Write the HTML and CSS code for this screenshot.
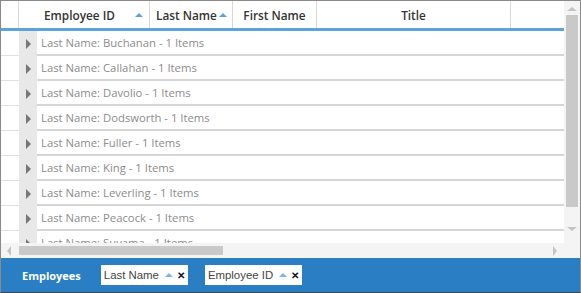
FILE: index.html
```html
<!DOCTYPE html>
<html>
<head>
    <title>Employees grid</title>
    <link rel="stylesheet" href="styles.css">
</head>
<body>
<div class="grid">
    <div class="grid-main">
        <div class="grid-content">
            <div class="grid-header">
                <div class="hcell indent"></div>
                <div class="hcell col-id">Employee ID<span class="sort"></span></div>
                <div class="hcell col-last">Last Name<span class="sort"></span></div>
                <div class="hcell col-first center">First Name</div>
                <div class="hcell col-title center">Title</div>
                <div class="hcell col-rest"></div>
            </div>
            <div class="grid-rows">
                <div class="group-row"><div class="indent"></div><div class="expander"><span class="tri"></span></div><div class="group-text">Last Name: Buchanan - 1 Items</div></div>
                <div class="group-row"><div class="indent"></div><div class="expander"><span class="tri"></span></div><div class="group-text">Last Name: Callahan - 1 Items</div></div>
                <div class="group-row"><div class="indent"></div><div class="expander"><span class="tri"></span></div><div class="group-text">Last Name: Davolio - 1 Items</div></div>
                <div class="group-row"><div class="indent"></div><div class="expander"><span class="tri"></span></div><div class="group-text">Last Name: Dodsworth - 1 Items</div></div>
                <div class="group-row"><div class="indent"></div><div class="expander"><span class="tri"></span></div><div class="group-text">Last Name: Fuller - 1 Items</div></div>
                <div class="group-row"><div class="indent"></div><div class="expander"><span class="tri"></span></div><div class="group-text">Last Name: King - 1 Items</div></div>
                <div class="group-row"><div class="indent"></div><div class="expander"><span class="tri"></span></div><div class="group-text">Last Name: Leverling - 1 Items</div></div>
                <div class="group-row"><div class="indent"></div><div class="expander"><span class="tri"></span></div><div class="group-text">Last Name: Peacock - 1 Items</div></div>
                <div class="group-row"><div class="indent"></div><div class="expander"><span class="tri"></span></div><div class="group-text">Last Name: Suyama - 1 Items</div></div>
            </div>
        </div>
        <div class="vscroll">
            <span class="arrow-up"></span>
            <div class="vthumb"></div>
            <span class="arrow-down"></span>
        </div>
        <div class="hscroll">
            <span class="arrow-left"></span>
            <div class="hthumb"></div>
            <span class="arrow-right"></span>
        </div>
        <div class="corner"></div>
    </div>
    <div class="group-panel">
        <span class="panel-title">Employees</span>
        <div class="chip">Last Name<span class="chip-sort"></span><span class="chip-x">&#x2715;</span></div>
        <div class="chip">Employee ID<span class="chip-sort"></span><span class="chip-x">&#x2715;</span></div>
    </div>
</div>
</body>
</html>
```
FILE: styles.css
```css
* {
    box-sizing: border-box;
}
body {
    margin: 0;
    font-family: "Open Sans", "Noto Sans", sans-serif;
    font-size: 11.3px;
    background: #fff;
}
.grid {
    width: 581px;
    height: 293px;
    border: 1px solid #8a8a8a;
    border-bottom-color: #444;
    display: flex;
    flex-direction: column;
}
.grid-main {
    flex: 1;
    display: grid;
    grid-template-columns: 1fr 16px;
    grid-template-rows: 1fr 15px;
    overflow: hidden;
}
.grid-content {
    overflow: hidden;
}
.grid-header {
    display: flex;
    height: 30px;
    border-bottom: 3px solid #5ba3d8;
}
.hcell {
    height: 27px;
    border-right: 1px solid #d8d8d8;
    font-weight: 600;
    font-size: 11.8px;
    color: #333;
    display: flex;
    align-items: center;
    padding-left: 25px;
    position: relative;
}
.hcell.center {
    justify-content: center;
    padding-left: 0;
}
.hcell.indent {
    width: 18px;
    padding: 0;
}
.col-id { width: 131px; }
.col-last { width: 83px; padding-left: 6px; }
.col-first { width: 84px; }
.col-title { width: 194px; }
.col-rest { flex: 1; border-right: none; }
.sort {
    position: absolute;
    top: 12px;
    width: 0;
    height: 0;
    border-left: 4px solid transparent;
    border-right: 4px solid transparent;
    border-bottom: 4px solid #5ba3d8;
}
.col-id .sort { right: 6px; }
.col-last .sort { right: 5px; }
.group-row {
    display: flex;
    height: 25px;
}
.group-row .indent {
    width: 18px;
    border-bottom: 1px solid #e0e0e0;
}
.expander {
    width: 18px;
    background: #e8e8e8;
    display: flex;
    align-items: center;
    justify-content: center;
}
.tri {
    width: 0;
    height: 0;
    border-top: 5px solid transparent;
    border-bottom: 5px solid transparent;
    border-left: 5px solid #777;
}
.group-text {
    flex: 1;
    color: #8c8c8c;
    padding-left: 4px;
    line-height: 23px;
    border-bottom: 2px solid #d6d6d6;
}
.vscroll {
    background: #f4f4f4;
    display: flex;
    flex-direction: column;
    align-items: center;
    padding-top: 6px;
}
.vthumb {
    width: 12px;
    height: 192px;
    background: #c9c9c9;
    margin-top: 4px;
}
.arrow-up, .arrow-down {
    width: 0;
    height: 0;
    border-left: 5px solid transparent;
    border-right: 5px solid transparent;
}
.arrow-up { border-bottom: 4px solid #c4c4c4; }
.arrow-down { border-top: 4px solid #c4c4c4; margin-top: 20px; }
.hscroll {
    background: #f4f4f4;
    display: flex;
    align-items: center;
    padding-left: 6px;
}
.hthumb {
    width: 204px;
    height: 9px;
    background: #c9c9c9;
    margin-left: 8px;
}
.arrow-left, .arrow-right {
    width: 0;
    height: 0;
    border-top: 5px solid transparent;
    border-bottom: 5px solid transparent;
}
.arrow-left { border-right: 4px solid #c4c4c4; }
.arrow-right { border-left: 4px solid #c4c4c4; margin-left: auto; margin-right: 7px; }
.corner { background: #f4f4f4; }
.group-panel {
    height: 34px;
    background: #2a7fc4;
    display: flex;
    align-items: center;
    padding-left: 21px;
}
.panel-title {
    color: #fff;
    font-weight: 700;
    font-size: 11px;
    margin-right: 20px;
}
.chip {
    height: 20px;
    background: #fff;
    color: #444;
    display: flex;
    align-items: center;
    padding: 0 3px 0 3px;
    margin-right: 17px;
    font-size: 11.4px;
    font-family: "Liberation Sans", Arial, sans-serif;
}
.chip-sort {
    width: 0;
    height: 0;
    border-left: 4px solid transparent;
    border-right: 4px solid transparent;
    border-bottom: 4px solid #7bb6dd;
    margin-left: 6px;
}
.chip-x {
    font-size: 10px;
    font-weight: bold;
    color: #111;
    margin-left: 4px;
}
```
